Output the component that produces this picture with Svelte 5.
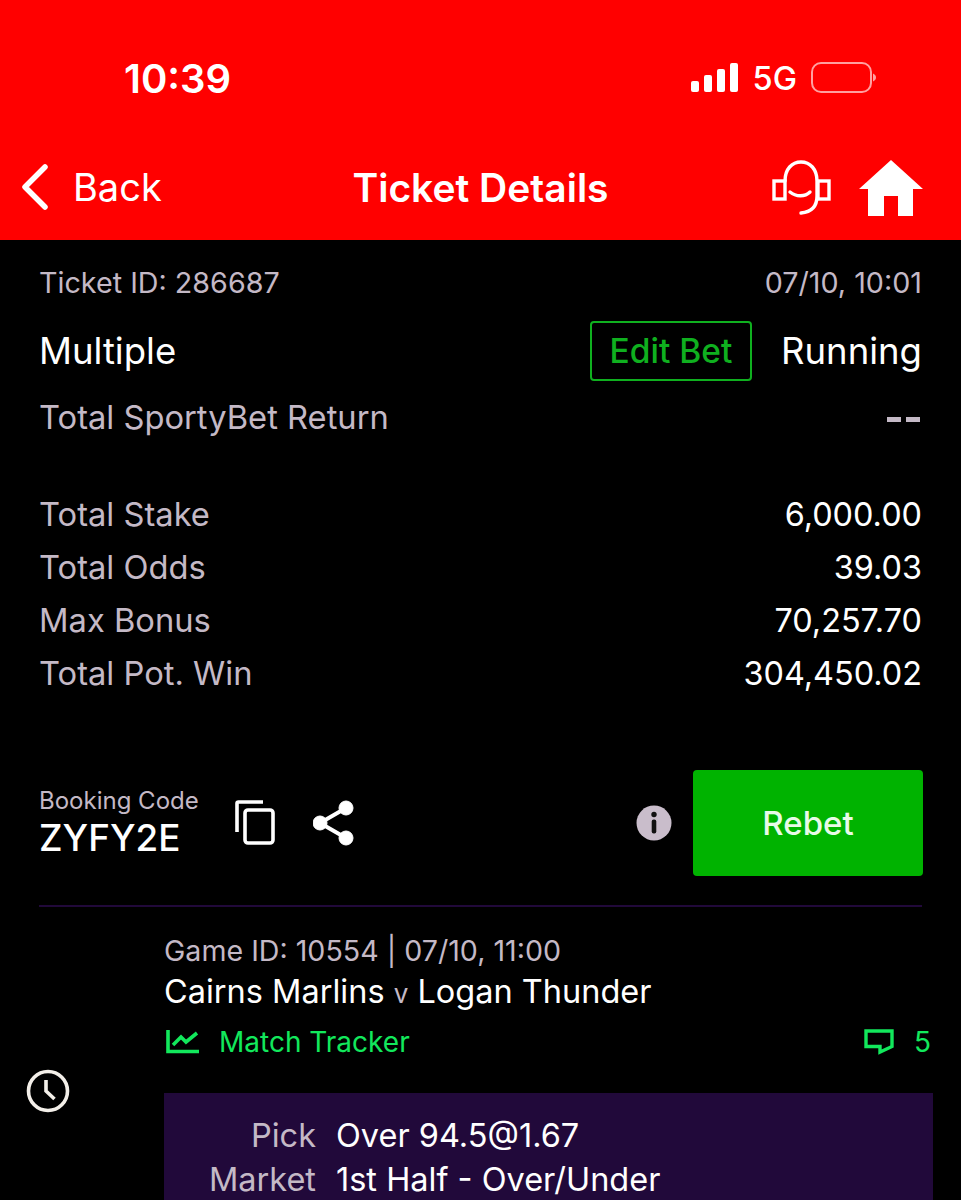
<script>
    const totals = [
        { label: "Total Stake", value: "6,000.00" },
        { label: "Total Odds", value: "39.03" },
        { label: "Max Bonus", value: "70,257.70" },
        { label: "Total Pot. Win", value: "304,450.02" },
    ];
</script>

<div class="page">
    <header class="top">
        <div class="status">
            <span class="time">10:39</span>
            <div class="status-right">
                <svg class="signal" width="47" height="30" viewBox="0 0 47 30" fill="#fff">
                    <rect x="0" y="18" width="8" height="11" rx="2" />
                    <rect x="13" y="12" width="8" height="17" rx="2" />
                    <rect x="26" y="6" width="8" height="23" rx="2" />
                    <rect x="39" y="0" width="8" height="29" rx="2" />
                </svg>
                <span class="net">5G</span>
                <svg class="battery" width="66" height="32" viewBox="0 0 66 32" fill="none">
                    <rect x="1" y="1" width="59" height="29" rx="9" stroke="#ffa0a0" stroke-width="2" />
                    <path d="M62 11.5 C64.5 13 65 14 65 15.5 C65 17 64.5 18 62 19.5Z" fill="#ffa0a0" />
                </svg>
            </div>
        </div>
        <nav class="bar">
            <div class="back">
                <svg width="30" height="46" viewBox="0 0 30 46" fill="none">
                    <path d="M25 3 L5 23 L25 43" stroke="#fff" stroke-width="5.5" stroke-linecap="round" stroke-linejoin="round" />
                </svg>
                <span>Back</span>
            </div>
            <h1>Ticket Details</h1>
            <div class="actions">
                <svg width="60" height="56" viewBox="0 0 60 56" fill="none" stroke="#fff" stroke-width="3.4">
                    <path d="M13 21 C13 9 20 2 29 2 C38 2 45 9 45 21 V36 C45 46 40 52 29 53" stroke-linecap="round" />
                    <rect x="2" y="21" width="11" height="18" />
                    <rect x="46" y="21" width="11" height="18" />
                    <path d="M18 32 C24 37 33 37 38 32" stroke-linecap="round" />
                </svg>
                <svg width="64" height="56" viewBox="0 0 64 56" fill="#fff">
                    <path d="M32 0 L64 29 H54 V56 H39 V36 H25 V56 H9 V29 H0 Z" />
                </svg>
            </div>
        </nav>
    </header>

    <main class="content">
        <div class="row ticket-row">
            <span class="muted small">Ticket ID: 286687</span>
            <span class="muted small">07/10, 10:01</span>
        </div>

        <div class="row type-row">
            <span class="type">Multiple</span>
            <div class="type-right">
                <button class="edit">Edit Bet</button>
                <span class="type">Running</span>
            </div>
        </div>

        <div class="row return-row">
            <span class="muted label">Total SportyBet Return</span>
            <span class="dashes"><i></i><i></i></span>
        </div>

        <div class="totals">
            {#each totals as t}
                <div class="row total">
                    <span class="muted label">{t.label}</span>
                    <span class="value">{t.value}</span>
                </div>
            {/each}
        </div>

        <div class="row booking">
            <div class="code-wrap">
                <div class="code">
                    <span class="muted code-label">Booking Code</span>
                    <strong>ZYFY2E</strong>
                </div>
                <svg class="copy" width="40" height="46" viewBox="0 0 40 46" fill="none" stroke="#fff" stroke-width="3.6">
                    <path d="M2 32 V3.5 C2 2.5 2.5 2 3.5 2 H28" />
                    <rect x="10" y="10" width="28" height="33" rx="3" />
                </svg>
                <svg class="share" width="42" height="46" viewBox="0 0 42 46" fill="#fff" stroke="#fff">
                    <circle cx="33" cy="8" r="7" />
                    <circle cx="7" cy="23" r="7" />
                    <circle cx="33" cy="38" r="7" />
                    <path d="M33 8 L7 23 L33 38" fill="none" stroke-width="4" />
                </svg>
            </div>
            <div class="rebet-wrap">
                <svg width="36" height="36" viewBox="0 0 36 36">
                    <circle cx="18" cy="18" r="17.5" fill="#c9bdcb" />
                    <circle cx="18" cy="9.5" r="2.7" fill="#111" />
                    <rect x="15.7" y="14.5" width="4.6" height="14" rx="2" fill="#111" />
                </svg>
                <button class="rebet">Rebet</button>
            </div>
        </div>

        <div class="divider"></div>

        <section class="game">
            <div class="clock-col">
                <svg width="46" height="46" viewBox="0 0 46 46" fill="none" stroke="#f3efe9">
                    <circle cx="23" cy="23" r="19.5" stroke-width="3.6" />
                    <path d="M21 12 V23 L29.5 31" stroke-width="3.6" />
                </svg>
            </div>
            <div class="game-body">
                <div class="muted game-id">Game ID: 10554 | 07/10, 11:00</div>
                <div class="teams">Cairns Marlins <em>v</em> Logan Thunder</div>
                <div class="row tracker">
                    <div class="link">
                        <svg width="33" height="24" viewBox="0 0 33 24" fill="none" stroke="#12e85c" stroke-width="3.6">
                            <path d="M2 0 V21.5 H33" />
                            <path d="M7 15 L15 7 L20 12 L31 3" />
                        </svg>
                        <span>Match Tracker</span>
                    </div>
                    <div class="link comments">
                        <svg width="30" height="27" viewBox="0 0 30 27" fill="none" stroke="#12e85c" stroke-width="3.4">
                            <path d="M2 2 H28 V17.5 L16 23 V17.5 H2 Z" />
                        </svg>
                        <span>5</span>
                    </div>
                </div>
                <div class="pick-box">
                    <div class="pick-row"><span class="muted">Pick</span><span>Over 94.5@1.67</span></div>
                    <div class="pick-row"><span class="muted">Market</span><span>1st Half - Over/Under</span></div>
                </div>
            </div>
        </section>
    </main>
</div>

<style>
    :global(body) {
        background: #000;
    }

    .page {
        height: 1200px;
        overflow: hidden;
        background: #000;
        color: #fff;
        font-family: Inter, "Liberation Sans", sans-serif;
    }

    .top {
        height: 240px;
        background: #f00;
        box-sizing: border-box;
        padding-top: 53px;
    }

    .status {
        display: flex;
        justify-content: space-between;
        align-items: center;
        height: 50px;
        padding: 0 84px 0 124px;
    }

    .time {
        font-size: 40px;
        font-weight: 600;
    }

    .status-right {
        display: flex;
        align-items: center;
        gap: 14px;
    }

    .net {
        font-size: 32.5px;
        font-weight: 500;
    }

    .signal {
        margin-right: 1px;
    }

    .bar {
        position: relative;
        display: flex;
        justify-content: space-between;
        align-items: center;
        height: 60px;
        margin-top: 54px;
        padding: 0 38px 0 20px;
    }

    .back {
        display: flex;
        align-items: center;
        gap: 23px;
        font-size: 38px;
    }

    h1 {
        position: absolute;
        left: 0;
        right: 0;
        margin: 0;
        text-align: center;
        font-size: 39px;
        font-weight: 600;
        pointer-events: none;
    }

    .actions {
        display: flex;
        align-items: center;
        gap: 27px;
        margin-top: 2px;
    }

    .content {
        padding: 0 39px;
    }

    .row {
        display: flex;
        justify-content: space-between;
        align-items: center;
    }

    .muted {
        color: #c4b9c6;
    }

    .small {
        font-size: 28.7px;
    }

    .ticket-row {
        height: 34px;
        margin-top: 25px;
    }

    .type-row {
        height: 60px;
        margin-top: 22px;
    }

    .type {
        font-size: 36.5px;
    }

    .type-right {
        display: flex;
        align-items: center;
        gap: 29px;
    }

    .edit {
        width: 162px;
        height: 60px;
        padding: 0;
        background: none;
        border: 2.5px solid #0fb01f;
        border-radius: 4px;
        color: #0fb01f;
        font: 500 33.5px Inter, sans-serif;
    }

    .return-row {
        height: 40px;
        margin-top: 16px;
    }

    .label {
        font-size: 32.7px;
    }

    .total .label {
        margin-top: -1px;
    }

    .dashes {
        display: flex;
        gap: 5px;
        margin-right: 2px;
        margin-top: 4px;
    }

    .dashes i {
        width: 14px;
        height: 5px;
        background: #c4b9c6;
    }

    .totals {
        margin-top: 51px;
    }

    .total {
        height: 53px;
    }

    .value {
        font-size: 32.4px;
    }

    .booking {
        height: 106px;
        margin-top: 70px;
    }

    .code-wrap {
        display: flex;
        align-items: center;
    }

    .code {
        display: flex;
        flex-direction: column;
        width: 196px;
    }

    .code-label {
        font-size: 24px;
    }

    .code strong {
        font-size: 36.8px;
        font-weight: 500;
    }

    .share {
        margin-left: 38px;
    }

    .rebet-wrap {
        display: flex;
        align-items: center;
        gap: 21px;
        margin-right: -1px;
    }

    .rebet {
        width: 230px;
        height: 106px;
        background: #00b300;
        border: 0;
        border-radius: 4px;
        color: #e8fbe8;
        font: 500 33px Inter, sans-serif;
    }

    .divider {
        height: 2px;
        margin-top: 29px;
        background: #21093a;
    }

    .game {
        display: flex;
        margin-right: -11px;
    }

    .clock-col {
        width: 125px;
        flex: none;
        margin-left: -14px;
        padding-top: 161px;
        margin-right: 14px;
    }

    .game-body {
        flex: 1;
    }

    .game-id {
        margin-top: 26px;
        font-size: 28.6px;
    }

    .teams {
        margin-top: 4px;
        font-size: 32.5px;
    }

    .teams em {
        font-size: 26px;
        font-style: normal;
        color: #c4b9c6;
    }

    .tracker {
        height: 40px;
        margin-top: 11px;
        padding-left: 2px;
        padding-right: 2px;
    }

    .link {
        display: flex;
        align-items: center;
        gap: 20px;
        color: #12e85c;
        font-size: 28px;
    }

    .comments {
        gap: 20px;
    }

    .pick-box {
        margin-top: 31px;
        padding: 23px 0 20px;
        background: #21093a;
        font-size: 32.5px;
    }

    .pick-row {
        display: grid;
        grid-template-columns: 152px 1fr;
        column-gap: 21px;
        margin-bottom: 5px;
    }

    .pick-row span:last-child {
        margin-left: -1px;
    }

    .pick-row .muted {
        text-align: right;
    }
</style>
